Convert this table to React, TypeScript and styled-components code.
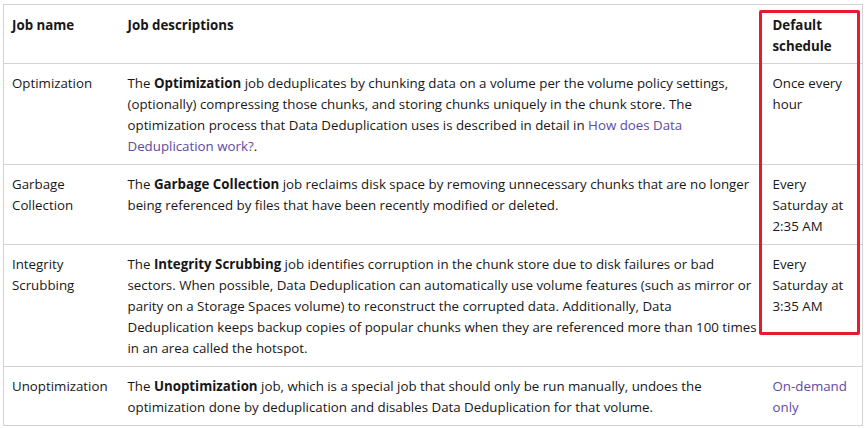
import React from "react";
import styled, { createGlobalStyle } from "styled-components";

const GlobalStyle = createGlobalStyle`
  html, body { margin: 0; padding: 0; background: #ffffff; }
  body {
    font-family: "Open Sans", "Noto Sans", sans-serif;
    font-size: 13.3px;
    line-height: 21px;
    color: #171717;
  }
`;

const Page = styled.div`
  position: relative;
  padding: 4px 4px 0 3px;
`;

const Table = styled.table`
  width: 859px;
  border-collapse: collapse;
  table-layout: fixed;
  border: 1px solid #d3d3d3;
`;

const Col = styled.col<{ $w: number }>`
  width: ${(p) => p.$w}px;
`;

const HeadCell = styled.th`
  text-align: left;
  vertical-align: top;
  font-weight: 700;
  padding: 10px 8px 6px 8px;
  border-bottom: 1px solid #d3d3d3;
`;

const BodyRow = styled.tr`
  border-bottom: 1px solid #d3d3d3;
`;

const Cell = styled.td`
  vertical-align: top;
  padding: 9px 8px 7px 8px;
`;

const Link = styled.a`
  color: #5e4b9f;
  text-decoration: none;
`;

const Plain = styled.span<{ $link?: boolean }>`
  color: ${(p) => (p.$link ? "#5e4b9f" : "inherit")};
`;

const Highlight = styled.div`
  position: absolute;
  left: 759px;
  top: 10px;
  width: 101px;
  height: 325px;
  box-sizing: border-box;
  border: 3px solid #e81a2d;
  border-radius: 2px;
  pointer-events: none;
`;

type Row = {
  name: React.ReactNode;
  desc: React.ReactNode;
  schedule: React.ReactNode;
};

const rows: Row[] = [
  {
    name: "Optimization",
    desc: (
      <>
        The <b>Optimization</b> job deduplicates by chunking data on a volume per the volume policy settings,
        (optionally) compressing those chunks, and storing chunks uniquely in the chunk store. The optimization
        process that Data Deduplication uses is described in detail in{" "}
        <Link href="#">How does Data Deduplication work?</Link>.
      </>
    ),
    schedule: "Once every hour",
  },
  {
    name: "Garbage Collection",
    desc: (
      <>
        The <b>Garbage Collection</b> job reclaims disk space by removing unnecessary chunks that are no longer
        being referenced by files that have been recently modified or deleted.
      </>
    ),
    schedule: "Every Saturday at 2:35 AM",
  },
  {
    name: "Integrity Scrubbing",
    desc: (
      <>
        The <b>Integrity Scrubbing</b> job identifies corruption in the chunk store due to disk failures or bad
        sectors. When possible, Data Deduplication can automatically use volume features (such as mirror or
        parity on a Storage Spaces volume) to reconstruct the corrupted data. Additionally, Data Deduplication
        keeps backup copies of popular chunks when they are referenced more than 100 times in an area called the
        hotspot.
      </>
    ),
    schedule: "Every Saturday at 3:35 AM",
  },
  {
    name: "Unoptimization",
    desc: (
      <>
        The <b>Unoptimization</b> job, which is a special job that should only be run manually, undoes the
        optimization done by deduplication and disables Data Deduplication for that volume.
      </>
    ),
    schedule: <Plain $link>On-demand only</Plain>,
  },
];

export default function App() {
  return (
    <Page>
      <GlobalStyle />
      <Table>
        <colgroup>
          <Col $w={116} />
          <Col $w={645} />
          <Col $w={98} />
        </colgroup>
        <thead>
          <tr>
            <HeadCell>Job name</HeadCell>
            <HeadCell>Job descriptions</HeadCell>
            <HeadCell>Default schedule</HeadCell>
          </tr>
        </thead>
        <tbody>
          {rows.map((r, i) => (
            <BodyRow key={i}>
              <Cell>{r.name}</Cell>
              <Cell>{r.desc}</Cell>
              <Cell>{r.schedule}</Cell>
            </BodyRow>
          ))}
        </tbody>
      </Table>
      <Highlight />
    </Page>
  );
}
